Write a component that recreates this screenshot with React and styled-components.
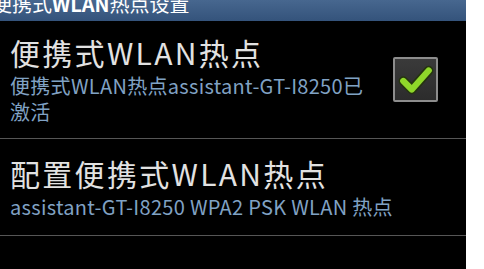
import React from "react"
import styled, { createGlobalStyle } from "styled-components"

const GlobalStyle = createGlobalStyle`
html, body {
  margin: 0;
  padding: 0;
  background: #ffffff;
}
body {
  font-family: "Noto Sans CJK SC", "Noto Sans", sans-serif;
}
`;

const Screen = styled.div`
width: 466px;
height: 269px;
background: #000;
overflow: hidden;
`;

const TitleBar = styled.div`
height: 21px;
background: linear-gradient(#47678f, #34537b);
overflow: hidden;
color: #fff;
font-size: 20px;
line-height: 20px;
white-space: nowrap;
`;

const TitleText = styled.div`
margin-top: -6px;
margin-left: -8px;
b {
  font-weight: 700;
}
`;

const Row = styled.div`
display: flex;
align-items: center;
height: ${props => props.height}px;
border-bottom: 1px solid #565656;
padding: 0 28px 0 10px;
`;

const TextColumn = styled.div`
flex: 1;
display: flex;
flex-direction: column;
gap: 3px;
`;

const Title = styled.div`
color: #e2e2e2;
font-size: 30px;
line-height: 36px;
letter-spacing: 2.3px;
white-space: nowrap;
`;

const Summary = styled.div`
color: #80a2c4;
font-size: 20px;
line-height: 26px;
letter-spacing: 0.3px;
white-space: nowrap;
`;

const CheckBox = styled.div`
width: 41px;
height: 41px;
border: 2px solid #8d8d8d;
border-radius: 2px;
background: linear-gradient(#3a3a3a, #2c2c2c);
display: flex;
align-items: center;
justify-content: center;
`;

const Check = () => (
  <svg width="38" height="38" viewBox="0 0 36 36">
    <path d="M6 19 L14 27 L30 9" fill="none" stroke="#263510" strokeWidth="9"
      strokeLinecap="round" strokeLinejoin="round"/>
    <path d="M6 19 L14 27 L30 9" fill="none" stroke="#8fd82a" strokeWidth="6"
      strokeLinecap="round" strokeLinejoin="round"/>
  </svg>
);

const App = () => {
  return (<Screen>
    <GlobalStyle/>
    <TitleBar>
      <TitleText>便携式<b>WLAN</b>热点设置</TitleText>
    </TitleBar>
    <Row height={117}>
      <TextColumn>
        <Title>便携式WLAN热点</Title>
        <Summary>便携式WLAN热点assistant-GT-I8250已<br/>激活</Summary>
      </TextColumn>
      <CheckBox>
        <Check/>
      </CheckBox>
    </Row>
    <Row height={96}>
      <TextColumn>
        <Title>配置便携式WLAN热点</Title>
        <Summary>assistant-GT-I8250 WPA2 PSK WLAN 热点</Summary>
      </TextColumn>
    </Row>
  </Screen>)
};

export default App
